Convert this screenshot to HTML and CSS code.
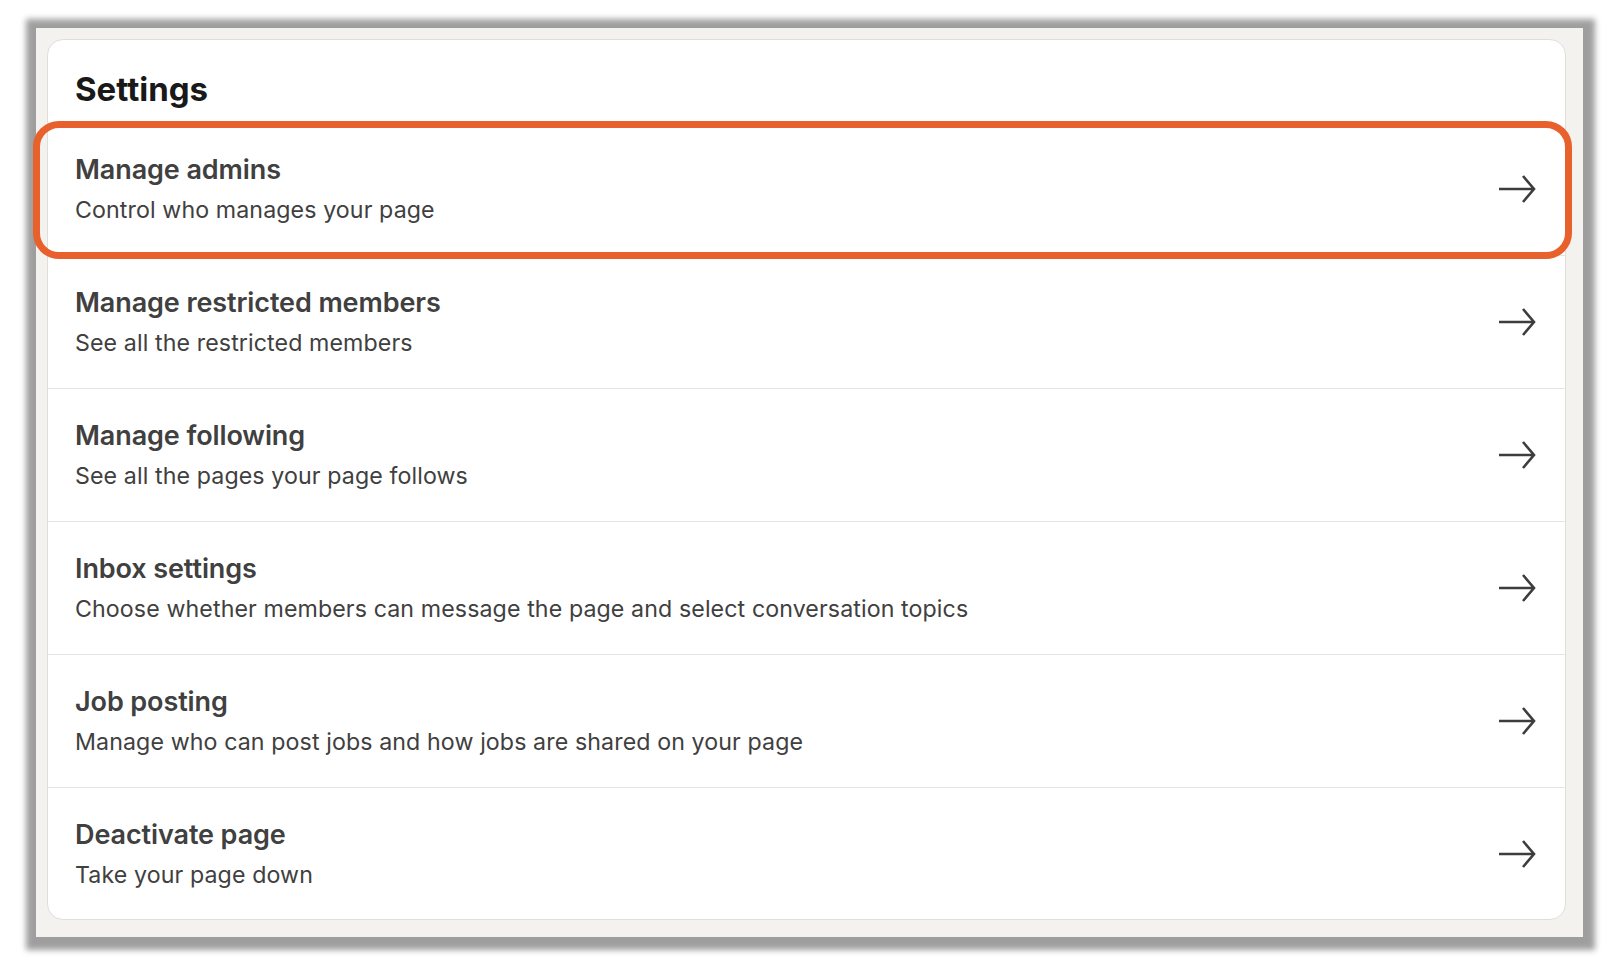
FILE: index.html
```html
<!DOCTYPE html>
<html lang="en">

<head>
    <meta charset="UTF-8">
    <meta name="viewport" content="width=device-width, initial-scale=1.0">
    <title>Settings</title>
    <link rel="stylesheet" href="styles.css">
</head>

<body>
    <div class="frame">
        <div class="card">
            <h1>Settings</h1>
            <div class="list">
                <a class="item item-highlight" href="#">
                    <div class="item-text">
                        <div class="item-title">Manage admins</div>
                        <div class="item-sub">Control who manages your page</div>
                    </div>
                    <svg class="arrow" viewBox="0 0 38 30"><path d="M1 15H36M25 2L36 15L25 28" /></svg>
                </a>
                <a class="item" href="#">
                    <div class="item-text">
                        <div class="item-title">Manage restricted members</div>
                        <div class="item-sub">See all the restricted members</div>
                    </div>
                    <svg class="arrow" viewBox="0 0 38 30"><path d="M1 15H36M25 2L36 15L25 28" /></svg>
                </a>
                <a class="item" href="#">
                    <div class="item-text">
                        <div class="item-title">Manage following</div>
                        <div class="item-sub">See all the pages your page follows</div>
                    </div>
                    <svg class="arrow" viewBox="0 0 38 30"><path d="M1 15H36M25 2L36 15L25 28" /></svg>
                </a>
                <a class="item" href="#">
                    <div class="item-text">
                        <div class="item-title">Inbox settings</div>
                        <div class="item-sub">Choose whether members can message the page and select conversation topics</div>
                    </div>
                    <svg class="arrow" viewBox="0 0 38 30"><path d="M1 15H36M25 2L36 15L25 28" /></svg>
                </a>
                <a class="item" href="#">
                    <div class="item-text">
                        <div class="item-title">Job posting</div>
                        <div class="item-sub">Manage who can post jobs and how jobs are shared on your page</div>
                    </div>
                    <svg class="arrow" viewBox="0 0 38 30"><path d="M1 15H36M25 2L36 15L25 28" /></svg>
                </a>
                <a class="item" href="#">
                    <div class="item-text">
                        <div class="item-title">Deactivate page</div>
                        <div class="item-sub">Take your page down</div>
                    </div>
                    <svg class="arrow" viewBox="0 0 38 30"><path d="M1 15H36M25 2L36 15L25 28" /></svg>
                </a>
            </div>
        </div>
    </div>
</body>

</html>
```

FILE: styles.css
```css
body {
    font-family: Inter, "Open Sans", sans-serif;
    background-color: #fff;
    margin: 0;
    padding: 28px 0 35px 36px
}

.frame {
    width: 1547px;
    height: 909px;
    box-sizing: border-box;
    padding: 11px 17px 17px 11px;
    background-color: #f3f2ef;
    box-shadow: 1px 2px 6px 11px rgba(0, 0, 0, .38)
}

.card {
    height: 100%;
    box-sizing: border-box;
    background-color: #fff;
    border: 1px solid #dfdedb;
    border-radius: 16px
}

h1 {
    margin: 0;
    padding: 27px 0 0 27px;
    height: 56px;
    font-size: 33px;
    font-weight: 700;
    line-height: 44px;
    color: #191919
}

.item {
    position: relative;
    display: flex;
    align-items: center;
    justify-content: space-between;
    height: 132px;
    padding: 0 29px 0 27px;
    border-bottom: 1px solid #e5e5e5;
    text-decoration: none;
    color: #404040
}

.item:last-child {
    border-bottom: none
}

.item-title {
    font-size: 27px;
    font-weight: 600;
    line-height: 36px;
    letter-spacing: -.1px
}

.item-sub {
    margin-top: 6px;
    font-size: 23.2px;
    line-height: 32px;
    letter-spacing: .1px
}

.arrow {
    width: 38px;
    height: 30px;
    fill: none;
    stroke: #3d3d3d;
    stroke-width: 2.6
}

.item-highlight::after {
    content: "";
    position: absolute;
    left: -15px;
    right: -7px;
    top: -2px;
    bottom: -4px;
    border: 7px solid #e8602c;
    border-radius: 26px;
    pointer-events: none
}
```
